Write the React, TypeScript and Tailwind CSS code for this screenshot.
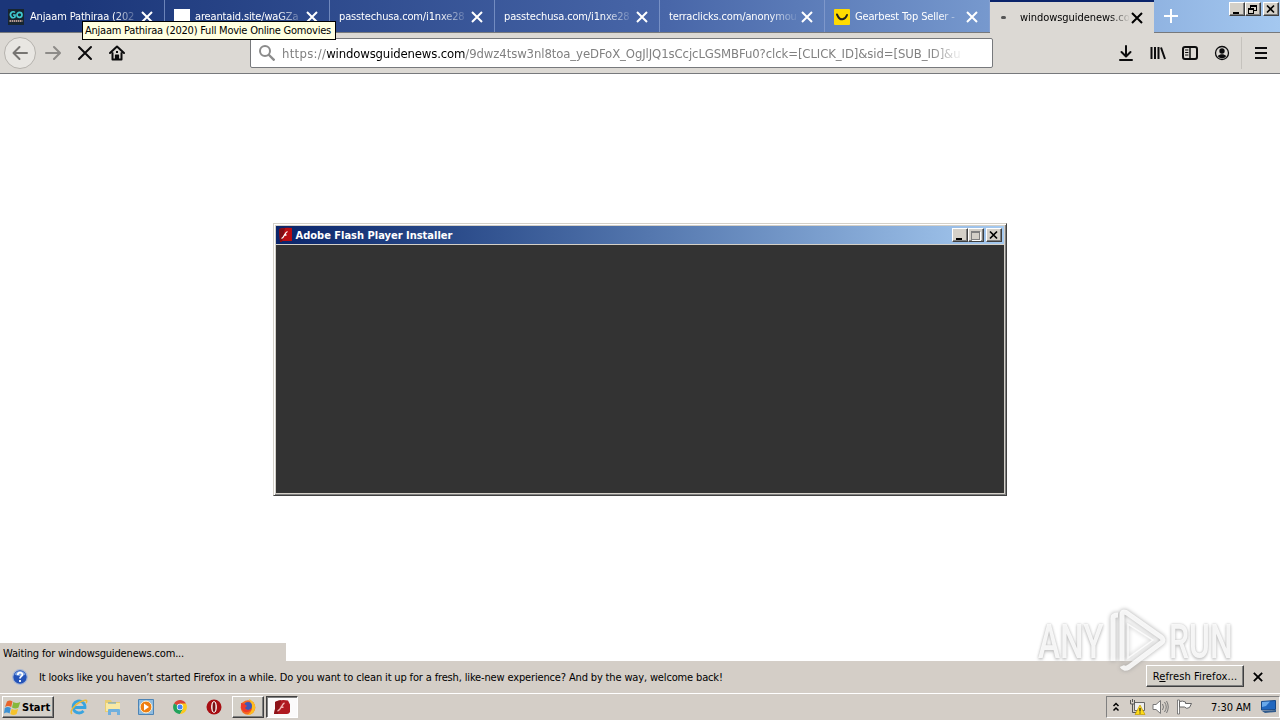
import type { ReactNode } from "react";
import clsx from "clsx";

interface Tab {
  title: string;
  icon?: "go" | "blank" | "gearbest";
}

const TABS: Tab[] = [
  { title: "Anjaam Pathiraa (202", icon: "go" },
  { title: "areantaid.site/waGZa", icon: "blank" },
  { title: "passtechusa.com/i1nxe28" },
  { title: "passtechusa.com/i1nxe28" },
  { title: "terraclicks.com/anonymou" },
  { title: "Gearbest Top Seller -", icon: "gearbest" },
];

const RAISED =
  "bg-[#d4d0c8] border border-t-white border-l-white border-r-[#404040] border-b-[#404040] shadow-[inset_-1px_-1px_0_#808080]";

function Cross({ size = 12, width = 2, className }: { size?: number; width?: number; className?: string }) {
  return (
    <svg width={size} height={size} viewBox="0 0 12 12" className={clsx("shrink-0", className)}>
      <path d="M1 1l10 10M11 1L1 11" stroke="currentColor" strokeWidth={width} fill="none" />
    </svg>
  );
}

function Favicon({ icon }: { icon: Tab["icon"] }) {
  if (icon === "blank") return <div className="h-4 w-4 shrink-0 bg-white" />;
  if (icon === "gearbest") {
    return (
      <svg width="16" height="16" viewBox="0 0 16 16" className="shrink-0">
        <rect width="16" height="16" rx="1" fill="#ffdb00" />
        <path d="M3 5.500l1 2c2 4 7 4 9-1.500" stroke="#222" strokeWidth="2" fill="none" strokeLinecap="round" />
      </svg>
    );
  }
  return (
    <svg width="16" height="16" viewBox="0 0 16 16" className="shrink-0">
      <rect width="16" height="16" fill="#17252f" />
      <path d="M7 3.500A2.700 3 0 1 0 7 8V6H5" stroke="#3fc9cf" strokeWidth="1.700" fill="none" />
      <circle cx="11.500" cy="5.800" r="2.500" stroke="#3fc9cf" strokeWidth="1.700" fill="none" />
      <path d="M1.500 12h13" stroke="#b79a92" strokeWidth="2" strokeDasharray="1.500 .6" />
    </svg>
  );
}

function WindowButton({ kind, className }: { kind: "min" | "max" | "restore" | "close"; className?: string }) {
  return (
    <div className={clsx("flex h-[14px] w-4 items-center justify-center", RAISED, className)}>
      <svg width="12" height="11" viewBox="0 0 12 11" fill="none" shapeRendering="crispEdges">
        {kind === "min" && <path d="M2 9h6" stroke="#000" strokeWidth="2" />}
        {kind === "max" && (
          <g stroke="#808080">
            <path d="M1.500 1.500h8v8h-8zM1 2.500h9" />
            <path d="M10.500 2v8.500H2" stroke="#fff" />
          </g>
        )}
        {kind === "restore" && (
          <g stroke="#000">
            <path d="M3.500 4V1.500h6v5H7M3 2.500h6" />
            <path d="M1.500 4.500h5v5h-5zM1 5.500h6" />
          </g>
        )}
        {kind === "close" && (
          <path d="M2 1.500l7 7M9 1.500l-7 7" stroke="#000" strokeWidth="1.700" shapeRendering="auto" />
        )}
      </svg>
    </div>
  );
}

function TabStrip() {
  return (
    <div className="flex h-[33px] border-b border-[#77797c] bg-linear-to-r from-[#1b3679] from-5% via-[#4866a8] via-52% to-[#a4c8f0]">
      {TABS.map((tab, i) => (
        <div
          key={i}
          className={clsx(
            "flex w-[165px] items-center border-r border-[#8ba3d2]/70 pt-[2px] text-white",
            i === 0 ? "pl-2" : "pl-[9px]",
          )}
        >
          {tab.icon && <Favicon icon={tab.icon} />}
          <div
            className={clsx(
              "min-w-0 flex-1 whitespace-nowrap tracking-[-0.15px] mask-r-from-76% mask-r-to-100%",
              tab.icon && (i === 0 ? "ml-[6px]" : "ml-[5px]"),
            )}
          >
            {tab.title}
          </div>
          <Cross size={12} className="mr-[11px] ml-px" />
        </div>
      ))}
      <div className="-mb-px flex h-[33px] w-[164px] items-center border-t-2 border-[#0a246a] bg-[#dcd9d4] pl-[11px]">
        <div className="h-[3px] w-[5px] rounded-full bg-[#555]" />
        <div className="ml-[14px] min-w-0 flex-1 whitespace-nowrap tracking-[-0.05px] mask-r-from-82% mask-r-to-100%">
          windowsguidenews.co
        </div>
        <Cross size={12} className="mr-[11px] ml-px" />
      </div>
      <svg width="33" height="32" viewBox="0 0 33 32">
        <path d="M10 16h14M17 9v14" stroke="#fff" strokeWidth="2" />
      </svg>
      <div className="ml-auto flex pt-[2px] pr-[1px]">
        <WindowButton kind="min" />
        <WindowButton kind="restore" />
        <WindowButton kind="close" className="ml-[2px]" />
      </div>
    </div>
  );
}

function ToolbarIcon({ children, className }: { children: ReactNode; className?: string }) {
  return (
    <svg
      width="16"
      height="16"
      viewBox="0 0 16 16"
      fill="none"
      stroke="#0c0c0d"
      strokeWidth="2"
      strokeLinecap="round"
      strokeLinejoin="round"
      className={clsx("shrink-0", className)}
    >
      {children}
    </svg>
  );
}

function Toolbar() {
  return (
    <div className="flex h-[41px] items-center border-b border-[#77797c] bg-[#dcd9d4]">
      <div className="ml-1 flex h-8 w-8 items-center justify-center rounded-full border border-[#b5b2ad] bg-[#e8e6e2]">
        <ToolbarIcon>
          <path d="M15 8H2M7.500 2L1.500 8l6 6" stroke="#777572" />
        </ToolbarIcon>
      </div>
      <ToolbarIcon className="ml-[9px]">
        <path d="M1 8h13M9 2l6 6-6 6" stroke="#8d8b88" />
      </ToolbarIcon>
      <ToolbarIcon className="ml-4">
        <path d="M2 2l12 12M14 2L2 14" />
      </ToolbarIcon>
      <ToolbarIcon className="ml-4">
        <path d="M1 8l7-6.500L15 8M3.500 8v6.500h9V8" />
        <path d="M6.500 14v-4h3v4" strokeWidth="1.200" fill="#0c0c0d" />
        <path d="M7 7h2" strokeWidth="1.800" strokeLinecap="butt" />
      </ToolbarIcon>
      <div className="ml-[125px] flex h-[30px] w-[743px] items-center rounded-[2px] border border-[#77797c] bg-white pl-2">
        <svg width="16" height="16" viewBox="0 0 16 16" fill="none" stroke="#8b8b8b" strokeWidth="2">
          <circle cx="6" cy="6" r="5" />
          <path d="M9.500 9.500L15.500 15.500" strokeWidth="2.400" />
        </svg>
        <div className="mt-[2px] ml-[7px] w-[682px] text-[13px] tracking-[-0.1px] whitespace-nowrap text-[#808080] mask-r-from-95% mask-r-to-100%">
          <span className="tracking-[0.28px]">https://</span>
          <span className="tracking-[-0.15px] text-black">windowsguidenews.com</span>
          /9dwz4tsw3nl8toa_yeDFoX_OgJlJQ1sCcjcLGSMBFu0?clck=[CLICK_ID]&amp;sid=[SUB_ID]&amp;u
        </div>
      </div>
      <div className="ml-auto flex items-center gap-4 pr-[11px]">
        <ToolbarIcon>
          <path d="M8 1v10M3.500 7L8 11.500 12.500 7M2 15h12" />
        </ToolbarIcon>
        <ToolbarIcon>
          <path d="M1.500 2v12M5 2v12M8.500 2v12M11 2.500l4 11.500" strokeLinecap="butt" />
        </ToolbarIcon>
        <ToolbarIcon>
          <rect x="1" y="2" width="14" height="12" rx="2" />
          <path d="M8 2v12" strokeWidth="1.500" />
          <path d="M3.500 5h2.500M3.500 7.500h2.500M3.500 10h2.500" strokeWidth="1" />
        </ToolbarIcon>
        <ToolbarIcon>
          <circle cx="8" cy="8" r="6.500" strokeWidth="1.300" />
          <circle cx="8" cy="6" r="2.700" fill="#0c0c0d" stroke="none" />
          <path d="M3.800 11c2.500-2.500 6-2.500 8.400 0-1.500 3-6.900 3-8.400 0z" fill="#0c0c0d" stroke="none" />
        </ToolbarIcon>
        <div className="-mx-[5px] h-8 w-px bg-[#c5c2bd]" />
        <ToolbarIcon>
          <path d="M2 3h12M2 8h12M2 13h12" strokeLinecap="butt" />
        </ToolbarIcon>
      </div>
    </div>
  );
}

function InstallerWindow() {
  return (
    <div className="flex h-[273px] w-[734px] flex-col border border-t-[#d4d0c8] border-r-[#404040] border-b-[#404040] border-l-[#d4d0c8] bg-[#d4d0c8] p-[2px] shadow-[inset_1px_1px_0_#fff,inset_-1px_-1px_0_#808080]">
      <div className="flex h-[18px] items-center bg-linear-to-r from-[#0a246a] to-[#a6caf0] pr-[2px] pl-[2px]">
        <svg width="16" height="16" viewBox="0 0 16 16">
          <path d="M1 2q6-2 13-1v13H2z" fill="#b80c12" />
          <path d="M1 2l6-1-3 14H2z" fill="#7d0c14" />
          <path d="M3.500 11.500c3-1 3-6 6-7M6 8h2.500" stroke="#fff" strokeWidth="1.300" fill="none" />
        </svg>
        <div className="mt-[2px] ml-[1.5px] font-bold text-white">Adobe Flash Player Installer</div>
        <WindowButton kind="min" className="ml-auto" />
        <WindowButton kind="max" />
        <WindowButton kind="close" className="ml-[2px]" />
      </div>
      <div className="mt-px h-[248px] bg-[#333]" />
    </div>
  );
}

function Watermark() {
  return (
    <div className="absolute top-[608px] left-[1038px] flex h-[66px] w-[196px] items-center justify-between font-[Roboto,sans-serif] text-[49px] leading-none font-medium text-white/85 [text-shadow:0_0_3px_#bbb,0_2px_4px_#ccc]">
      <div className="w-[66px]">
        <div className="w-max origin-left scale-x-[0.68]">ANY</div>
      </div>
      <svg width="60" height="66" viewBox="0 0 60 66" fill="none" className="drop-shadow-[0_0_2px_#999]">
        <path
          d="M6 53V10q0-3 5-3M15 53V7q0-5 5-2l34 24q4 3 0 6L22 59q-5 3-7-1"
          stroke="#fff"
          strokeOpacity=".85"
          strokeWidth="5"
        />
        <path d="M21 16v34l25-18z" stroke="#fff" strokeOpacity=".8" strokeWidth="1.500" />
      </svg>
      <div className="w-[65px]">
        <div className="w-max origin-left scale-x-[0.65]">RUN</div>
      </div>
    </div>
  );
}

function NotificationBar() {
  return (
    <div className="flex h-8 items-center bg-[#d4cec7] pl-3">
      <svg width="16" height="16" viewBox="0 0 16 16">
        <circle cx="8" cy="8" r="7.300" fill="#2453b8" stroke="#aab8d5" strokeWidth="1.200" />
        <path d="M2.500 5.500a6 6 0 0 1 11 0q-5 3-11 0z" fill="#7fa5e3" />
        <path d="M5.800 6c0-3.200 4.800-3 4.600-.3C10.300 7.500 8 7.300 8 9.500M8 11v2" stroke="#fff" strokeWidth="1.800" fill="none" />
      </svg>
      <div className="mt-px ml-[11px] whitespace-nowrap tracking-[-0.15px]">
        It looks like you haven’t started Firefox in a while. Do you want to clean it up for a fresh, like-new
        experience? And by the way, welcome back!
      </div>
      <div className={clsx("mt-[-2px] ml-auto flex h-[22px] w-[98px] items-center justify-center whitespace-nowrap", RAISED)}>
        <div className="pt-px tracking-[0.1px]">
          R<u>e</u>fresh Firefox...
        </div>
      </div>
      <Cross size={10} width={2.2} className="mr-[17px] ml-[9px]" />
    </div>
  );
}

function QuickLaunch() {
  return (
    <>
      <svg width="18" height="18" viewBox="0 0 18 18" fill="none" className="ml-[16px]">
        <path d="M4.500 9.500H15A6 6 0 1 0 13.500 13" stroke="#39a4df" strokeWidth="2.800" />
        <path d="M2 16c-3-2 2-9 8-12s8-2 6 1" stroke="#e9b93c" strokeWidth="1.500" />
      </svg>
      <svg width="18" height="18" viewBox="0 0 18 18" className="ml-4">
        <path d="M1 2h6l1 2h8v10H1z" fill="#e8cd72" />
        <path d="M2 5h14v8H2z" fill="#f8e9a4" />
        <path d="M4 17v-5q0-1 1-1h10q1 0 1 1v5h-3v-3H7v3z" fill="#6fb0de" />
        <path d="M4 5h8" stroke="#5c9ccc" />
      </svg>
      <svg width="16" height="16" viewBox="0 0 16 16" className="ml-4">
        <path d="M.5.5h15v15H.5z" fill="#8fbce0" stroke="#4d84b5" />
        <circle cx="8" cy="8" r="5.900" fill="#ee7f12" stroke="#fff0d0" />
        <path d="M6 4.500l5 3.500-5 3.500z" fill="#fff" />
      </svg>
      <svg width="14" height="14" viewBox="0 0 14 14" className="ml-[19px]">
        <path d="M7 7L1 3.500A7 7 0 0 1 13 3.500z" fill="#db4437" />
        <path d="M7 7L1 3.500A7 7 0 0 0 7 14l3-5z" fill="#21a35b" />
        <path d="M7 7l3 2-3 5A7 7 0 0 0 13 3.500H7z" fill="#fbc91b" />
        <circle cx="7" cy="7" r="3.200" fill="#fff" />
        <circle cx="7" cy="7" r="2.500" fill="#4285f4" />
      </svg>
      <svg width="16" height="16" viewBox="0 0 16 16" className="ml-[19px]">
        <circle cx="8" cy="8" r="7.500" fill="#a80e13" />
        <ellipse cx="8" cy="8" rx="2.300" ry="5.300" fill="#d4b5b3" stroke="#fff" strokeWidth="1" />
        <ellipse cx="8" cy="8" rx="1.300" ry="5" fill="#791015" />
      </svg>
    </>
  );
}

function Taskbar() {
  return (
    <div className="flex h-[27px] items-center border-t border-white bg-[#d4cec7]">
      <div className={clsx("ml-[2px] flex h-[22px] w-[52px] items-center pl-px", RAISED)}>
        <svg width="17" height="17" viewBox="0 0 17 17" className="shrink-0">
          <path d="M3 2.500q3-2 5.500 0L7.200 8Q4 6 1 8z" fill="#e8642b" />
          <path d="M9.300 3q3 2 7 0L14.500 8.500q-3 2-6.500 0z" fill="#86b83b" />
          <path d="M.8 9q3-2 6 0l-1.200 5.500q-3-2-5.600 0z" fill="#3d91d3" />
          <path d="M7.700 9.700q3 2 6.500 0L12.600 15q-3 2-6.300 0z" fill="#f6c32c" />
        </svg>
        <span className="mt-px ml-px font-bold">Start</span>
      </div>
      <QuickLaunch />
      <div className={clsx("ml-[10px] flex h-[22px] w-8 items-center justify-center", RAISED)}>
        <svg width="16" height="16" viewBox="0 0 16 16">
          <circle cx="8" cy="8.500" r="7.300" fill="#f46a20" />
          <path d="M9 0c4 2 7 5 6 10-1 4-4 6-8 6 6-3 6-8 2-16z" fill="#ffbd20" />
          <circle cx="8" cy="7" r="4" fill="#3f57b5" />
          <path d="M1 4c2 0 4 1 6 3l-2 2c2 3 5 2 7 0-1 5-9 6-11 0z" fill="#ee3a2a" />
        </svg>
      </div>
      <div className="ml-[2px] flex h-[22px] w-8 items-center justify-center border border-t-[#404040] border-r-white border-b-white border-l-[#404040] bg-[#fbfafa] shadow-[inset_1px_1px_0_#808080]">
        <svg width="18" height="16" viewBox="0 0 18 16">
          <path d="M2 3q6-3 13-1.500l2 4V13q-1 2-3 2H1l1-5z" fill="#b01a20" />
          <path d="M2 3q3-2 6-1.800L5 15H1l1-5z" fill="#8d1318" />
          <path d="M4.500 12c4-1 4-7 7-8M7.500 8.300h3" stroke="#f0b5b2" strokeWidth="1.400" fill="none" />
        </svg>
      </div>
      <div className="ml-auto flex h-[22px] w-[174px] items-center border border-t-[#808080] border-r-white border-b-white border-l-[#808080]">
        <svg width="8" height="10" viewBox="0 0 8 10" fill="none" stroke="#000" strokeWidth="1.500" className="ml-[5px]">
          <path d="M1.500 4L4 1.500 6.500 4M1.500 8.500L4 6l2.500 2.500" />
        </svg>
        <svg width="17" height="16" viewBox="0 0 17 16" className="ml-[9px]">
          <path d="M5.500 3.500h10v8h-10z" fill="#eee" stroke="#666" />
          <path d="M1.500 1v4h4V1M3.500 0v3M3.500 5v8.500H8" stroke="#555" fill="none" />
          <path d="M11 6l5 9.500H6z" fill="#ffdc18" stroke="#c09a00" strokeWidth=".7" />
          <path d="M11 9v3.500M11 13.500v1" stroke="#222" strokeWidth="1.200" />
        </svg>
        <svg width="17" height="16" viewBox="0 0 17 16" fill="none" stroke="#777" className="ml-[6px]">
          <path d="M1 5.500h3L8.500 1.500v13L4 10.500H1z" fill="#fff" />
          <path d="M10.500 5q2 3 0 6M12.500 3q3.500 5 0 10M14.500 2q3.500 6 0 12" />
        </svg>
        <svg width="17" height="16" viewBox="0 0 17 16" className="ml-[7px]">
          <path d="M1.500 1h2v14h-2z" fill="#fff" stroke="#666" strokeWidth=".8" />
          <path d="M3.500 2.500q3-1 6 .5v1.500h6l-2 4q-3 2-5-.5H3.500z" fill="#fff" stroke="#666" />
        </svg>
        <div className="ml-auto pt-px tracking-[-0.1px] whitespace-nowrap">7:30 AM</div>
        <svg width="16" height="14" viewBox="0 0 16 14" className="mr-[2px] ml-[10px]">
          <path d="M.5 1.500l14-1v9l-14 .5z" fill="#2267bf" stroke="#174787" />
          <path d="M1 2l8-.5L5 6l-4 1z" fill="#69a8ea" />
          <path d="M1 11l14-1v2L4 13z" fill="#315b8c" />
        </svg>
      </div>
    </div>
  );
}

export default function App() {
  return (
    <div className="relative flex h-[720px] w-[1280px] flex-col overflow-hidden bg-white font-['DejaVu_Sans_Condensed','DejaVu_Sans',sans-serif] text-[11px] leading-[14px] text-black">
      <TabStrip />
      <Toolbar />
      <div className="flex h-[587px] flex-col items-center pt-[149px]">
        <InstallerWindow />
        <div className="mt-auto flex h-[18px] w-[286px] items-center self-start bg-[#d4cec7] pt-[3px] pl-[3px] tracking-[-0.16px]">
          Waiting for windowsguidenews.com...
        </div>
      </div>
      <NotificationBar />
      <Taskbar />
      <div className="absolute top-[21px] left-[82px] flex h-[19px] w-[254px] items-center border border-black bg-[#ffffe1] pt-px pl-[2px] tracking-[-0.23px] whitespace-nowrap">
        Anjaam Pathiraa (2020) Full Movie Online Gomovies
      </div>
      <Watermark />
    </div>
  );
}
